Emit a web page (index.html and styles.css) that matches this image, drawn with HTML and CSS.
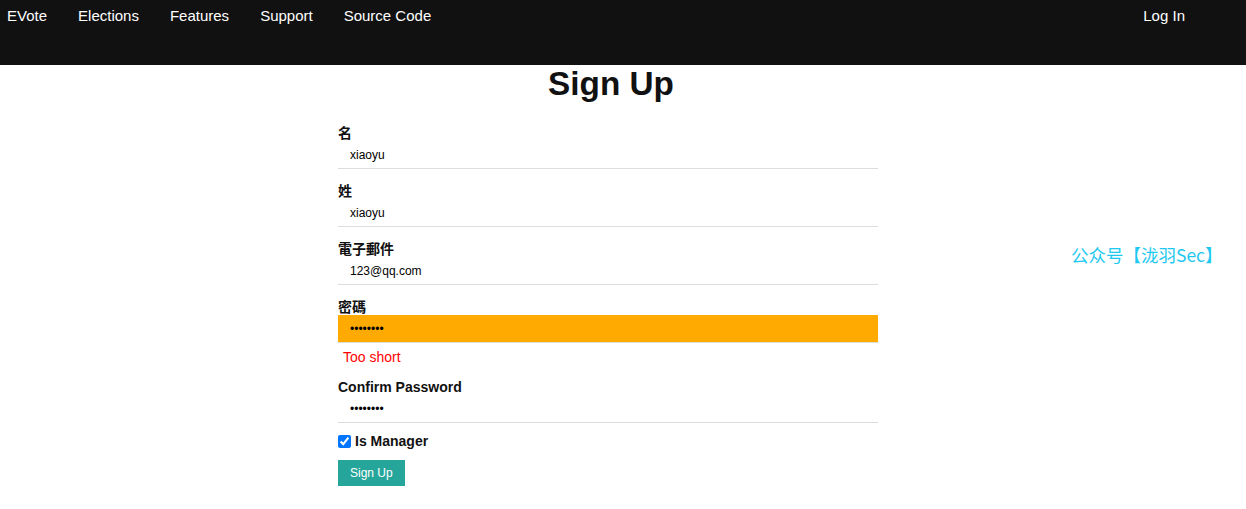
FILE: index.html
```html
<!DOCTYPE html>
<html lang="zh">
<head>
<meta charset="utf-8">
<title>Sign Up</title>
<link rel="stylesheet" href="styles.css">
</head>
<body>
<nav class="topnav">
  <a class="nav-link" href="#">EVote</a>
  <a class="nav-link" href="#">Elections</a>
  <a class="nav-link" href="#">Features</a>
  <a class="nav-link" href="#">Support</a>
  <a class="nav-link" href="#">Source Code</a>
  <a class="nav-link nav-right" href="#">Log In</a>
</nav>
<main class="signup">
  <h1 class="title">Sign Up</h1>
  <form class="form">
    <div class="field">
      <label class="label">名</label>
      <input class="input" type="text" value="xiaoyu">
    </div>
    <div class="field">
      <label class="label">姓</label>
      <input class="input" type="text" value="xiaoyu">
    </div>
    <div class="field">
      <label class="label">電子郵件</label>
      <input class="input" type="text" value="123@qq.com">
    </div>
    <div class="field">
      <label class="label">密碼</label>
      <input class="input input-warn" type="password" value="12345678">
      <p class="error">Too short</p>
    </div>
    <div class="field field-last">
      <label class="label">Confirm Password</label>
      <input class="input" type="password" value="12345678">
    </div>
    <div class="check-row">
      <input class="check" type="checkbox" checked>
      <span class="check-label">Is Manager</span>
    </div>
    <button class="btn" type="button">Sign Up</button>
  </form>
</main>
<div class="watermark">公众号【泷羽Sec】</div>
</body>
</html>
```

FILE: styles.css
```css
html, body {
  margin: 0;
  padding: 0;
  background: #ffffff;
  font-family: "Liberation Sans", Arial, "Noto Sans CJK SC", sans-serif;
  color: #111111;
}

.topnav {
  display: flex;
  align-items: flex-start;
  height: 65px;
  background: #111111;
  padding: 7px 61px 0 7px;
  box-sizing: border-box;
  gap: 31px;
}

.nav-link {
  color: #ffffff;
  text-decoration: none;
  font-size: 15px;
  line-height: 17px;
}

.nav-right {
  margin-left: auto;
}

.signup {
  margin-left: 338px;
  width: 540px;
}

.title {
  margin: 0;
  padding-left: 6px;
  font-size: 33.3px;
  line-height: 37px;
  font-weight: bold;
  text-align: center;
  color: #111111;
}

.form {
  margin-top: 23px;
}

.field {
  margin-bottom: 14px;
}

.field-last {
  margin-bottom: 10px;
}

.label {
  display: block;
  font-size: 14px;
  line-height: 16px;
  font-weight: bold;
  color: #111111;
  font-family: "Liberation Sans", Arial, "Noto Sans CJK TC", sans-serif;
}

.input {
  display: block;
  width: 100%;
  height: 28px;
  box-sizing: border-box;
  margin: 0;
  padding: 0 0 0 12px;
  border: none;
  border-bottom: 1px solid #dddddd;
  background: transparent;
  font-family: "Liberation Sans", Arial, sans-serif;
  font-size: 12px;
  color: #000000;
  outline: none;
}

.input-warn {
  background: #ffaa00;
}

.error {
  margin: 6px 0 2px 5px;
  font-size: 14px;
  line-height: 16px;
  color: #ff0000;
}

.check-row {
  display: flex;
  align-items: center;
  height: 16px;
}

.check {
  margin: 0 4px 0 0;
  width: 13px;
  height: 13px;
}

.check-label {
  font-size: 14px;
  line-height: 16px;
  font-weight: bold;
  color: #111111;
}

.btn {
  display: block;
  margin-top: 11px;
  height: 26px;
  padding: 0 12px;
  border: none;
  background: #26a69a;
  color: #ffffff;
  font-family: "Liberation Sans", Arial, sans-serif;
  font-size: 12px;
}

.watermark {
  position: absolute;
  left: 1071px;
  top: 243px;
  font-size: 17.5px;
  line-height: 24px;
  color: #1ec8f0;
  font-family: "Noto Sans CJK SC", sans-serif;
  white-space: nowrap;
}
```
